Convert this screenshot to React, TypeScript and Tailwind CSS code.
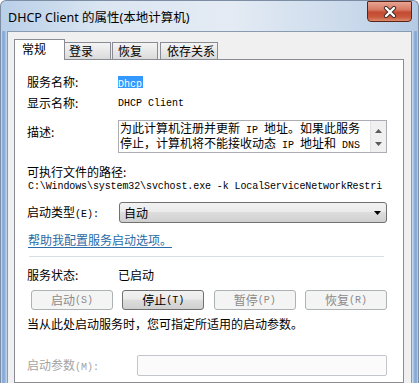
import React from "react";

const M = ({ children }: { children: React.ReactNode }) => (
  <span className="font-['Liberation_Mono',monospace] text-[10px]">{children}</span>
);

const Up = () => (
  <svg width="7" height="4" viewBox="0 0 7 4"><path d="M0 4 L3.5 0 L7 4 Z" fill="#5a5a5a" /></svg>
);
const Down = () => (
  <svg width="7" height="4" viewBox="0 0 7 4"><path d="M0 0 L7 0 L3.5 4 Z" fill="#5a5a5a" /></svg>
);

function Btn({ label, acc, enabled }: { label: string; acc: string; enabled?: boolean }) {
  return (
    <div
      className={
        enabled
          ? "w-[82px] h-[20px] flex items-center justify-center rounded-[3px] border border-[#707070] bg-[linear-gradient(to_bottom,#f2f2f2,#ebebeb_45%,#dddddd_50%,#cfcfcf)] text-black"
          : "w-[82px] h-[20px] flex items-center justify-center rounded-[3px] border border-[#adb2b5] bg-[#f4f4f4] text-[#8a8a8a]"
      }
    >
      <span className="leading-[16px]">{label}</span>
      <M>{acc}</M>
    </div>
  );
}

export default function App() {
  return (
    <div className="w-[419px] h-[383px] overflow-hidden bg-white">
      <div className="w-[419px] h-[383px] flex flex-col rounded-t-[6px] border-x border-t border-[#7d8ea4] bg-[linear-gradient(to_right,#b9cfe8,#dbe6f2_25%,#e4ebf4_55%,#c9d9eb_85%,#b4cae4)] font-['Noto_Sans','Noto_Sans_CJK_SC',sans-serif] text-[12px] text-black">
        {/* Title bar */}
        <div className="h-[30px] shrink-0 flex items-start pl-[7px] pt-[8px] relative">
          <span className="leading-[17px] text-[12.5px]">DHCP Client 的属性(本地计算机)</span>
          <div className="absolute right-[6px] top-0 w-[45px] h-[21px] rounded-b-[4px] rounded-t-[1px] border border-[#5b2216] bg-[linear-gradient(to_bottom,#e7a593,#d77a63_40%,#c44a31_55%,#c95a3f_80%,#dd8c6c)] flex items-center justify-center">
            <svg width="14" height="12" viewBox="0 0 14 12">
              <path d="M3 2 L11 10 M11 2 L3 10" stroke="#3b2a26" strokeWidth="4.2" strokeLinecap="round" />
              <path d="M3 2 L11 10 M11 2 L3 10" stroke="#ffffff" strokeWidth="2.4" strokeLinecap="round" />
            </svg>
          </div>
        </div>

        {/* Body */}
        <div className="flex-1 flex min-h-0">
          <div className="w-[6px] shrink-0 bg-[linear-gradient(to_right,#d9e6f4,#7fa6d6_30%,#8fb1db_60%,#c8daee)]" />
          <div className="w-[405px] shrink-0 flex flex-col border-l border-t border-r border-[#8a9bb0] bg-[#f0f0f0] pt-[7px]">
            {/* Tabs */}
            <div className="h-[20px] shrink-0 flex items-end ml-[6px] font-['Noto_Sans_CJK_SC',sans-serif]">
              <div className="relative z-10 -mb-px w-[51px] h-[21px] border-x border-t border-[#898c95] bg-white pl-[7px] pt-[1px] leading-[16px]">
                常规
              </div>
              <div className="w-[46px] h-[17px] border-r border-t border-[#898c95] bg-[linear-gradient(to_bottom,#f4f4f4,#e8e8e8_50%,#dadada)] pl-[4px] leading-[16px]">
                登录
              </div>
              <div className="ml-[1px] w-[46px] h-[17px] border-x border-t border-[#898c95] bg-[linear-gradient(to_bottom,#f4f4f4,#e8e8e8_50%,#dadada)] pl-[5px] leading-[16px]">
                恢复
              </div>
              <div className="ml-[2px] w-[58px] h-[17px] border-x border-t border-[#898c95] bg-[linear-gradient(to_bottom,#f4f4f4,#e8e8e8_50%,#dadada)] pl-[6px] leading-[16px]">
                依存关系
              </div>
            </div>

            {/* Panel */}
            <div className="flex-1 ml-[6px] mr-[7px] border border-[#898c95] bg-white pt-[12px] pl-[12px] pr-[16px] flex flex-col font-['Noto_Sans_CJK_SC',sans-serif]">
              <div className="h-[20px] flex items-center">
                <div className="w-[91px]">服务名称:</div>
                <span className="inline-block h-[12px] leading-[12px] pr-[1px] bg-[#3399ff] text-white">
                  <M>Dhcp</M>
                </span>
              </div>
              <div className="mt-[1px] h-[20px] flex items-center">
                <div className="w-[91px]">显示名称:</div>
                <M>DHCP Client</M>
              </div>
              <div className="mt-[7px] flex items-start">
                <div className="w-[91px] mt-[2px] leading-[20px]">描述:</div>
                <div className="flex-1 h-[33px] border border-[#abadb3] bg-white flex">
                  <div className="flex-1 pl-[1px] pt-[1px] leading-[12px] whitespace-nowrap">
                    <div>为此计算机注册并更新<M> IP </M>地址。如果此服务</div>
                    <div>停止，计算机将不能接收动态<M> IP </M>地址和<M> DNS</M></div>
                  </div>
                  <div className="w-[16px] bg-[#f0f0f0] border-l border-[#e2e2e2] flex flex-col items-center pt-[8px]">
                    <Up />
                    <div className="h-[9px]" />
                    <Down />
                  </div>
                </div>
              </div>
              <div className="mt-[11px] h-[16px] leading-[16px]">可执行文件的路径:</div>
              <div className="h-[13px] leading-[13px] whitespace-nowrap font-['Liberation_Mono',monospace] text-[10px] tracking-[-0.1px] pl-[1px]">
                C:\Windows\system32\svchost.exe -k LocalServiceNetworkRestri
              </div>
              <div className="mt-[9px] flex items-center">
                <div className="w-[92px]">
                  启动类型<M>(E):</M>
                </div>
                <div className="flex-1 h-[21px] rounded-[3px] border border-[#707070] bg-[linear-gradient(to_bottom,#f2f2f2,#ebebeb_45%,#dddddd_50%,#cfcfcf)] flex items-center pl-[4px] pr-[5px]">
                  <span className="flex-1 leading-[16px]">自动</span>
                  <svg width="7" height="4" viewBox="0 0 7 4"><path d="M0 0 L7 0 L3.5 4 Z" fill="#000" /></svg>
                </div>
              </div>
              <div className="mt-[9px] h-[16px] leading-[16px] pl-[1px]">
                <span className="text-[#2a6aa5] underline underline-offset-[2px]">帮助我配置服务启动选项。</span>
              </div>
              <div className="mt-[8px] ml-[2px] mr-[3px] h-px bg-[#d5dfe5]" />
              <div className="mt-[9px] h-[17px] flex items-center">
                <div className="w-[91px]">服务状态:</div>
                <div>已启动</div>
              </div>
              <div className="mt-[7px] pl-[4px] flex justify-between">
                <Btn label="启动" acc="(S)" />
                <Btn label="停止" acc="(T)" enabled />
                <Btn label="暂停" acc="(P)" />
                <Btn label="恢复" acc="(R)" />
              </div>
              <div className="mt-[6px] h-[16px] leading-[16px] whitespace-nowrap">
                当从此处启动服务时，您可指定所适用的启动参数。
              </div>
              <div className="mt-[23px] flex items-center">
                <div className="w-[110px] text-[#a3a3a3]">
                  启动参数<M>(M):</M>
                </div>
                <div className="flex-1 h-[21px] border border-[#c3c7cc] rounded-[2px] bg-[#fbfbfb]" />
              </div>
            </div>
          </div>
          <div className="w-[6px] shrink-0 bg-[linear-gradient(to_right,#d3e1f0,#8fb1db_40%,#7ea5d5_70%,#c5d8ed)]" />
        </div>
      </div>
    </div>
  );
}
